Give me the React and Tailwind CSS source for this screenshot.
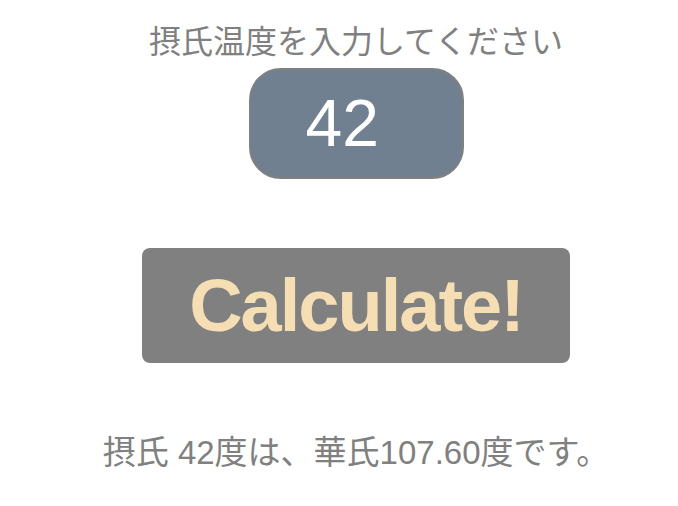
export default function App() {
  return (
    <div
      className="flex flex-col items-center w-[678px] h-[506px] bg-white pl-[34px]"
      style={{ fontFamily: '"Liberation Sans", "Noto Sans CJK JP", sans-serif' }}
    >
      <div className="mt-[22px] h-[40px] leading-[40px] text-[32px] text-[#808080]">
        摂氏温度を入力してください
      </div>
      <div className="mt-[6px] w-[215px] h-[111px] rounded-[32px] border-2 border-[#808080] bg-[#708090] flex items-center pl-[55px] text-[66px] text-white">
        42
      </div>
      <div className="mt-[69px] w-[428px] h-[115px] rounded-[8px] bg-[#808080] flex items-center justify-center text-[74px] font-bold text-[#f5deb3] tracking-[-2px]">
        Calculate!
      </div>
      <div className="mt-[70px] h-[40px] leading-[40px] text-[33px] text-[#808080]">
        摂氏 42度は、華氏107.60度です。
      </div>
    </div>
  );
}
